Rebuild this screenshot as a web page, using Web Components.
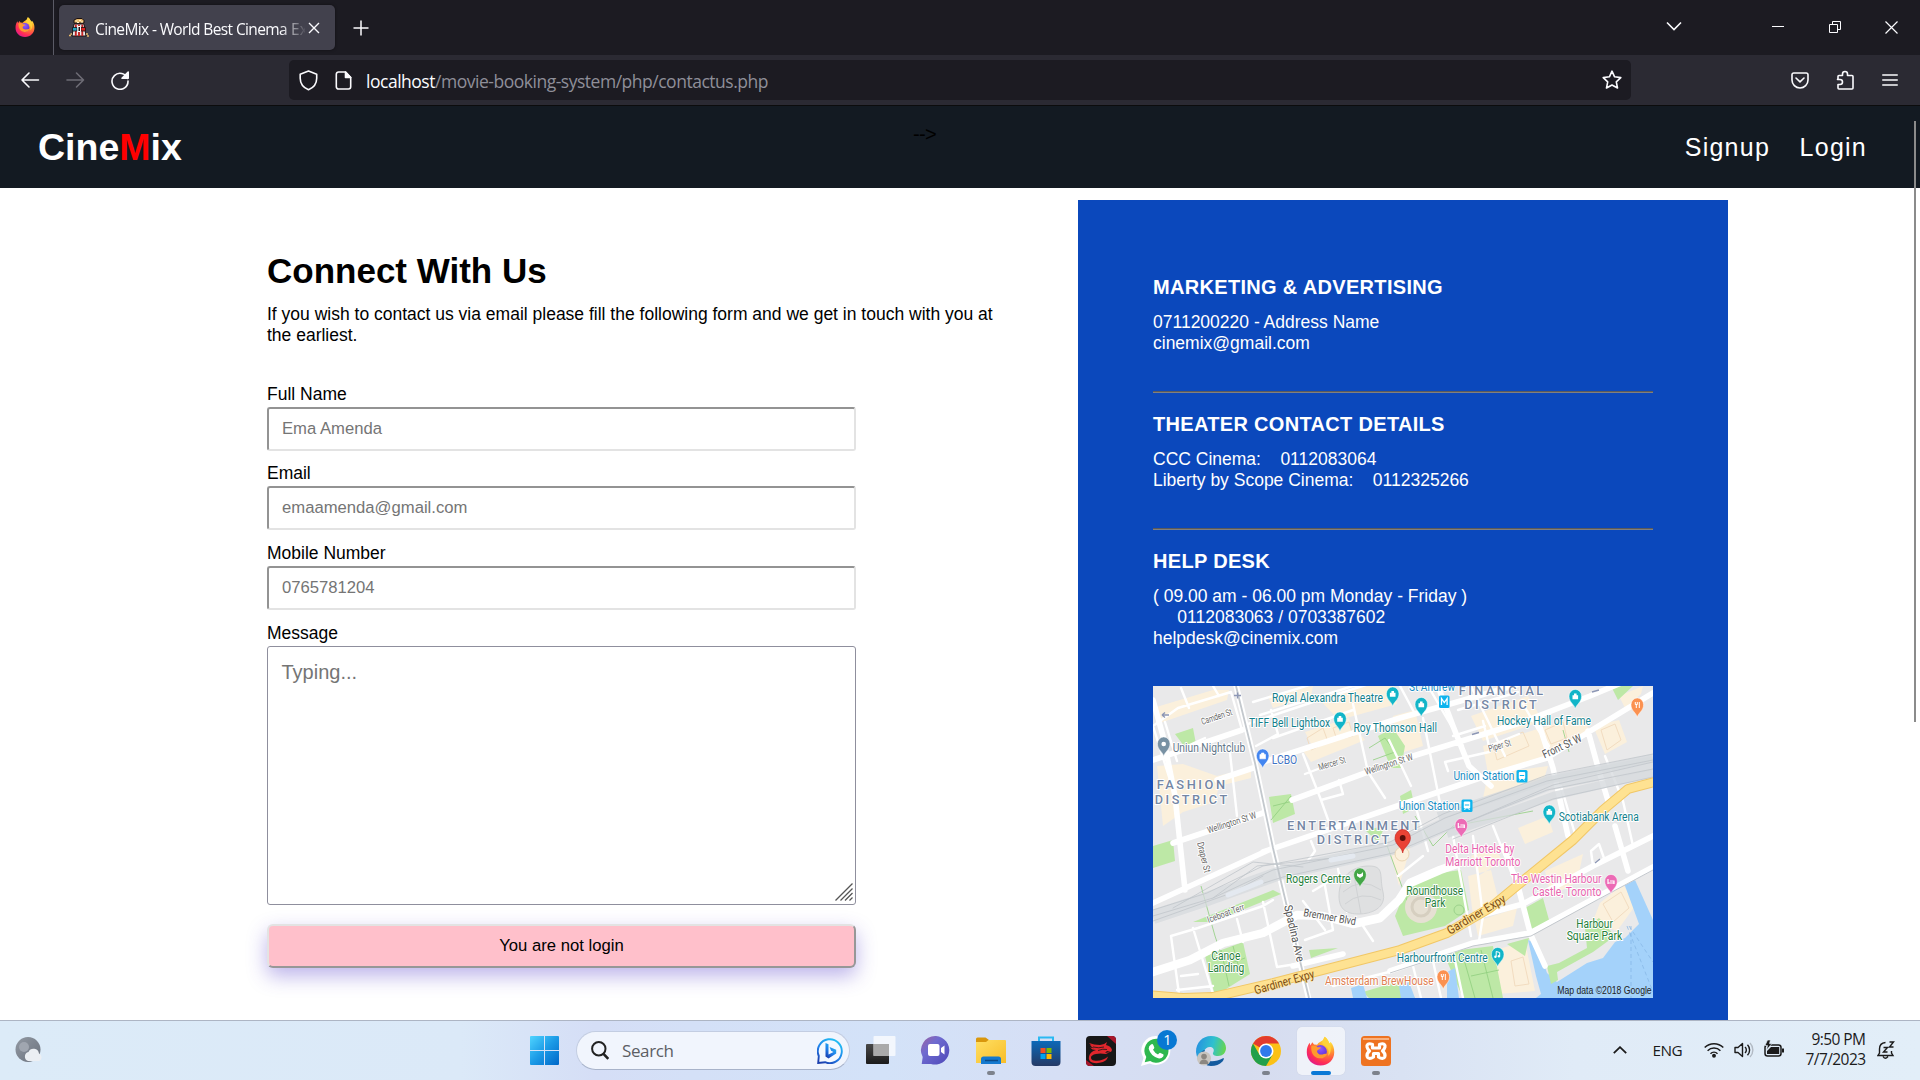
<!DOCTYPE html>
<html lang="en">
<head>
<meta charset="utf-8">
<title>CineMix</title>
<style>
html,body{margin:0;padding:0;background:#fff}
body{width:1920px;height:1080px;overflow:hidden;font-family:"Liberation Sans",Arial,sans-serif}
</style>
</head>
<body>
<desktop-screen></desktop-screen>
<script>
const make=(name,html,after)=>customElements.define(name,class extends HTMLElement{
  connectedCallback(){
    if(this.shadowRoot)return;
    const t=document.createElement('template');
    t.innerHTML=html;
    this.attachShadow({mode:'open'}).appendChild(t.content.cloneNode(true));
    if(after)after(this,this.shadowRoot);
  }
});

/* Text run spread to the width given in "w" */
make('fit-text',`<style>:host{display:inline-block;white-space:pre}</style><slot></slot>`,(el)=>{
  const w=parseFloat(el.getAttribute('w'));
  el.style.letterSpacing='0px';
  const n=el.textContent.length,now=el.getBoundingClientRect().width;
  if(n>1&&now)el.style.letterSpacing=((w-now)/n).toFixed(3)+'px';
});

/* Firefox mark, used in the title bar and the taskbar */
make('firefox-mark',`<style>:host{display:block}svg{display:block;width:100%;height:100%}</style>
<svg viewBox="0 0 30 30"><defs>
<radialGradient id="a" cx=".78" cy=".12" r="1"><stop offset="0" stop-color="#fff44f"/><stop offset=".3" stop-color="#ffb82c"/><stop offset=".55" stop-color="#ff7139"/><stop offset=".8" stop-color="#ff2d55"/><stop offset="1" stop-color="#e01a8c"/></radialGradient>
<radialGradient id="b" cx=".5" cy=".3" r=".7"><stop offset="0" stop-color="#9059ff"/><stop offset="1" stop-color="#5a2bd0"/></radialGradient></defs>
<path fill="url(#a)" d="M15 30C6.700 30 .8 24 .8 16.200c0-4 1-7.200 3-9.700l.8 2.700L6.500 6l1.800 2.200 3.200.3c1.500-2.500 4.500-3.200 6-4.500L19.300.3c3 2 4 4.500 4.700 6.700l1.500-1.200c2.700 3 3.700 6.500 3.700 10.400C29.200 24 23.300 30 15 30z"/>
<circle cx="15" cy="15.500" r="6.600" fill="url(#b)"/>
<path fill="#ff9a2e" d="M5.500 9.500c3-.8 5 .2 6.500 1.500l3.500.2c-.6 2-2.500 2-3.800 3.300-.7 1 .2 3.200 2.400 4 3 .8 5-.8 7.700-.5-1.500 3.300-4.600 5-8 4.500C8 21.800 4.800 17 5.500 9.500z"/>
<path fill="#ffd23a" d="M19.300.3c3 2 4 4.500 4.700 6.700 3 5 1.500 11-1 13 1-4.500.3-8.500-3-10.500-2.500-1.500-4-3-2.500-5.500z"/></svg>`);

make('browser-tabs',`<style>
:host{display:flex;height:55px;background:#1c1b22;align-items:flex-start;color:#fbfbfe}
.ff{width:54px;height:55px;border-right:1px solid #5b5b66;display:flex;align-items:center;box-sizing:border-box;padding-left:15px}
firefox-mark{width:20px;height:20px;margin-top:-1px}
.tab{margin:5px 0 0 5px;width:276px;height:45px;border-radius:5px;background:#42414d;display:flex;align-items:center;box-shadow:0 0 3px rgba(0,0,0,.5)}
.fav{width:20px;height:20px;margin-left:10px}
.t{margin:3px 0 0 6px;width:210px;overflow:hidden;white-space:nowrap;font:15.500px "Open Sans","Noto Sans",sans-serif;line-height:24px;-webkit-mask-image:linear-gradient(90deg,#000 185px,transparent 212px);mask-image:linear-gradient(90deg,#000 185px,transparent 212px)}
.x{width:12px;height:12px;margin-left:3px}
.plus{width:16px;height:16px;margin:20px 0 0 18px}
.sp{flex:1}
.wb{display:flex;align-items:flex-start}
svg{display:block;fill:none;stroke:#fbfbfe}
</style>
<div class="ff"><firefox-mark></firefox-mark></div>
<div class="tab">
<svg class="fav" viewBox="0 0 20 20" stroke="none"><path d="M5 2 8 .5h5l2 2V5H5z" fill="#e9b96a" stroke="#1b1010" stroke-width="1"/><path d="M6.500 3h2M10 2.500h2M12 4h2M8 4.500h2" stroke="#fff3c4"/><path d="M5 6h10l2 12H3z" fill="#ececec" stroke="#1b1010"/><path d="M6.800 6.500v11.500M10 6.500v11.500M13.300 6.500v11.500" stroke="#c32525" stroke-width="1.900"/><path d="M3.500 9.500H8V13H3.500z" fill="#21a5c4" stroke="#1b1010" stroke-width=".8"/><path d="M12 9.500h4.500V13H12z" fill="#d22" stroke="#1b1010" stroke-width=".8"/><path d="M9 8.500h2.500v5H9z" fill="#1b1010"/><path d="M0 17.500h2M1.500 16h1.500M17 16h2M18 18h2" stroke="#e9b96a" stroke-width="1.500"/></svg>
<div class="t"><fit-text w="192">CineMix - World Best Cinema</fit-text><span> Experience</span></div>
<svg class="x" viewBox="0 0 12 12" stroke-width="1.400"><path d="m1 1 10 10M11 1 1 11"/></svg></div>
<svg class="plus" viewBox="0 0 16 16" stroke-width="1.500"><path d="M8 .5v15M.5 8h15"/></svg>
<div class="sp"></div>
<div class="wb">
<svg style="width:16px;height:10px;margin:21px 90px 0 0" viewBox="0 0 16 10" stroke-width="1.600"><path d="m1 1.500 7 7 7-7"/></svg>
<svg style="width:12px;height:12px;margin:20px 45px 0 0" viewBox="0 0 12 12" stroke-width="1"><path d="M0 6.500h12"/></svg>
<svg style="width:12px;height:12px;margin:21px 44px 0 0" viewBox="0 0 12 12" stroke-width="1"><path d="M.5 3.500h8v8h-8zM3.500 3.500v-3h8v8h-3"/></svg>
<svg style="width:13px;height:13px;margin:20.500px 22px 0 0" viewBox="0 0 13 13" stroke-width="1.200"><path d="m.5.5 12 12M12.500.5l-12 12"/></svg>
</div>`);

make('browser-toolbar',`<style>
:host{display:flex;height:50px;background:#2b2a33;border-bottom:1px solid #0c0c0d;align-items:center}
svg{display:block;fill:none;stroke:#fbfbfe;stroke-width:1.600;stroke-linecap:round;stroke-linejoin:round;flex:none}
.url{width:1342px;height:40px;border-radius:5px;background:#1c1b22;display:flex;align-items:center;box-sizing:border-box;padding:0 9px 0 10px;margin-left:159px}
.addr{flex:1;margin-left:14px;font:17.500px "Open Sans","Noto Sans",sans-serif;line-height:24px;color:#8f8f99;white-space:nowrap;padding-top:2px}
.addr b{font-weight:400;color:#fbfbfe}
</style>
<svg width="20" height="18" viewBox="0 0 20 18" style="margin-left:20px"><path d="M18.500 9H2M9 2 2 9l7 7"/></svg>
<svg width="20" height="18" viewBox="0 0 20 18" style="margin-left:26px;stroke:#6d6c75"><path d="M1 9h16.500M10.500 2l7 7-7 7"/></svg>
<svg width="20" height="20" viewBox="0 0 20 20" style="margin-left:24px"><path d="M17.500 8.500A8 8 0 1 0 18 11"/><path d="M18.200 2v6.200H12z" fill="#fbfbfe"/></svg>
<div class="url">
<svg width="19" height="21" viewBox="0 0 19 21" stroke-width="1.800"><path d="M9.500 1 17.700 4.200v4c0 5-3 9.300-8.200 11.600C4.300 17.500 1.200 13.200 1.200 8.200v-4z"/></svg>
<svg width="17" height="19" viewBox="0 0 17 19" style="margin-left:17px"><path d="M10.500 1H3.500a2.200 2.200 0 0 0-2.200 2.200v12.600A2.200 2.200 0 0 0 3.500 18h10a2.200 2.200 0 0 0 2.200-2.200V6.500z"/><path d="M10.500 1v5.500h5.200z" fill="#fbfbfe"/></svg>
<div class="addr"><fit-text w="402"><b>localhost</b>/movie-booking-system/php/contactus.php</fit-text></div>
<svg width="20" height="20" viewBox="0 0 20 20"><path d="m10 1.200 2.600 5.600 6.200.8-4.500 4.200 1.200 6.200-5.500-3-5.500 3 1.200-6.200L1.200 7.600l6.200-.8z"/></svg>
</div>
<svg width="18" height="17" viewBox="0 0 18 17" style="margin:0 0 0 160px"><path d="M2.700 1h12.600A1.700 1.700 0 0 1 17 2.700V8A8 8 0 0 1 1 8V2.700A1.700 1.700 0 0 1 2.700 1z"/><path d="m5 6 4 3.800L13 6"/></svg>
<svg width="18" height="20" viewBox="0 0 18 20" style="margin-left:27px"><path d="M2 8.500V6.500a1 1 0 0 1 1-1h3.500V4a2.500 2.500 0 0 1 5 0v1.500H16a1 1 0 0 1 1 1V18a1 1 0 0 1-1 1H3a1 1 0 0 1-1-1v-3.500h2a2.200 2.200 0 0 0 0-5H1.500z"/></svg>
<svg width="16" height="14" viewBox="0 0 16 14" style="margin-left:28px"><path d="M.8 2h14.400M.8 7h14.400M.8 12h14.400"/></svg>`);

make('site-header',`<style>
:host{display:flex;height:82px;background:#131a22;box-sizing:border-box;padding:0 53px 0 38px;color:#fff;justify-content:space-between;align-items:flex-start}
.logo{font-weight:700;font-size:37.500px;line-height:44px;margin-top:19px;width:300px}
.logo b{color:red}
.stray{color:#000;font-size:20px;line-height:24px;margin-top:16px;width:26px;margin-left:147px;letter-spacing:-.7px}
nav{display:flex;gap:29.500px;font-size:25px;letter-spacing:1.250px;line-height:30px;margin-top:26px;width:500px;justify-content:flex-end}
</style><div class="logo">Cine<b>M</b>ix</div><div class="stray">--&gt;</div><nav><span>Signup</span><span>Login</span></nav>`);

make('form-field',`<style>
:host{display:block;margin-bottom:12.700px}
label{display:block;font-size:17.500px;line-height:20px;margin-bottom:3px;color:#000}
.box{box-sizing:border-box;width:589px;height:44px;border:2px solid;border-color:#939393 #e3e3e3 #e3e3e3 #939393;border-radius:3px;padding-left:13px;font-size:16.670px;line-height:39.500px;color:#757575;background:#fff}
:host([area]){margin-bottom:19px}
:host([area]) .box{display:flex;justify-content:space-between;height:259px;border:1px solid #8f8f9d;border-radius:3px;padding:14px 2px 3px 13.500px;font-size:20px;line-height:23px}
svg{display:none}
:host([area]) svg{display:block;align-self:flex-end}
</style><label><slot name="label"></slot></label><div class="box"><slot></slot><svg width="18" height="18" viewBox="0 0 18 18" stroke="#555" stroke-width="1.300" fill="none"><path d="M.5 17.500 17.500.5M5.500 17.500l12-12M10 17.500l7.500-7.500M14.500 17.500l3-3"/></svg></div>`);

make('contact-form',`<style>
:host{display:block;width:811px;padding-top:63px;box-sizing:border-box}
h1{margin:0;font-size:35px;line-height:40px}
p{margin:13px 0 37.500px;width:740px;font-size:17.500px;line-height:21px}
.btn{box-sizing:border-box;width:589px;height:44px;background:#ffc0cb;border:2px solid;border-color:#e3e3e3 #979797 #979797 #e3e3e3;border-radius:6px;text-align:center;font-size:16.670px;line-height:39px;box-shadow:0 8px 20px rgba(78,56,200,.38)}
</style><h1>Connect With Us</h1>
<p>If you wish to contact us via email please fill the following form and we get in touch with you at the earliest.</p>
<form-field><span slot="label">Full Name</span>Ema Amenda</form-field>
<form-field><span slot="label">Email</span>emaamenda@gmail.com</form-field>
<form-field><span slot="label">Mobile Number</span>0765781204</form-field>
<form-field area><span slot="label">Message</span>Typing...</form-field>
<div class="btn">You are not login</div>`);

const S='stroke-linecap="round" stroke-linejoin="round" fill="none"';
const T=(t,x,y,w,c,o='')=>`<text x="${x}" y="${y}" textLength="${w}" lengthAdjust="spacingAndGlyphs" fill="${c}" ${o}>${t}</text>`;
const R=(t,x,y,a,w,c='#666',f=9.5)=>`<text transform="translate(${x} ${y}) rotate(${a})" textLength="${w}" lengthAdjust="spacingAndGlyphs" fill="${c}" font-size="${f}">${t}</text>`;
const P=(x,y,c,g='')=>`<g transform="translate(${x} ${y})"><path d="M0 12.500C-.6 8-6.300 6-6.300-.3a6.300 6.800 0 0 1 12.600 0C6.300 6 .6 8 0 12.500z" fill="${c}" stroke="#fff" stroke-width=".5"/>${g||'<path d="M-2.800 2.800v-4h1.500V-3h2.600v1.800h1.500v4z" fill="#fff"/>'}</g>`;
const teal='#137f8c',dist='#7486a4',park='#25803a',tp='#12b5c8',pk='#ec6bb5',orr='#fb9150';
const bed='<path d="M-3-2.500v5M-3 1.500h6v-2h-4M3 1.500v1" stroke="#fff" fill="none" stroke-width="1.200"/>';
const fork='<path d="M-2-3v2.500h2V-3M-1-1v4M2-3v6" stroke="#fff" fill="none"/>';
const bus=(x,y)=>`<g transform="translate(${x} ${y})"><rect width="11" height="12.500" rx="1.500" fill="#0eb4ee"/><rect x="2.300" y="2" width="6.400" height="7" rx="1" fill="#fff"/><path d="M3.300 5.500h4.400" stroke="#0eb4ee"/><path d="m3 10.500 1-1.500m4 1.500L7 9" stroke="#fff"/></g>`;
const minor=`M0 40 25 22 78 6M0 40 22 110M12 36 24 75M28 2 36 22M60 0 66 10M76 58 84 130M30 62 52 52M89 44 78 6M100 16 180-8M107 29 200 0 237-5M95 38 130 26 172 12 235-8M120 52 200 24M103 60 125 48 118 24M150 68 168 114 178 142M200 18 215 86 232 112M152 88 178 78M165 104 190 96M168 114 190 108 186 94M262 118 275 165M270 32 288 122M247 0 262 28M236 54 258 100M300 50 332 40M330 35 336 60 366 48M370 18 384 42M295 85 292 76 336 66M275 0 310 60M318 0 352 70M384 42 396 60M305 24 365 6M408 100 422 148M422 148 470 110 500 92M452 70 470 115 480 160M18 250 26 308M18 250 45 242 110 220 120 214M40 242 60 308M84 233 90 256M110 216 124 281 150 277M150 215 172 244M160 205 185 190M172 200 180 244 152 254M185 183 194 226M210 240 220 255M300 150 318 250M320 150 330 230 326 255M340 140 352 170M352 160 378 250M245 190 270 170M440 180 438 165 446 158 452 175 430 185M260 280 268 312M280 275 288 312M300 265 310 312M28 290 45 288M24 304 60 300M180 300 240 285M155 175 162 165 158 155`;
const major=`M0 14 10 50 22 110 32 204M82-5 102 77 120 162 134 221 156 314M0 74 89 44M64 94 100 82M110 76 247 32 297 18 377-5M139 114 247 74 367 37 437 10 480-8M110 166 247 119 327 92 394 72 434 47 500 7M20 157 110 127M0 217 120 162M283-5 300 40 316 80 338 100M385 35 400 82 415 150M435 45 446 85 456 118M237 285 320 257 377 247 444 211 500 181M318 232 370 218 440 180 500 150M350 160 365 200 378 250M377 247 392 280M462 140 475 185M140 280 190 268`;
make('city-map',`<style>:host{display:block;width:500px;height:312px}svg{display:block}</style>
<svg width="500" height="312" viewBox="0 0 500 312" font-family="Roboto,sans-serif" font-size="12">
<rect width="500" height="312" fill="#e9e9ea"/>
<g fill="#fbf0dc"><path d="M0 22 60 4 76 4 74 14 4 38zM4 80 30 78 64 90 98 82 98 92 66 100 62 116 30 126 10 140zM115 10 160 0 158 10 120 22zM150 65 205 45 212 54 158 76zM152 46 196 32 200 52 160 62zM165 12 240-8 244 18 186 34zM240 30 262 24 270 60 245 68zM318 30 375 10 390 35 330 55zM330 60 394 40 430 30 436 44 394 70 335 88zM440 40 466 34 474 56 452 68zM466 10 490 0 488 8 472 22zM335 88 395 80 390 96 330 112zM365 142 395 130 400 146 372 158zM318 170 340 160 350 175 325 190zM315 190 320 230 345 212 338 184zM392 185 430 168 424 196 398 210zM340 265 372 255 382 305 345 308zM447 217 470 198 482 220 464 245 440 235zM322 236 364 222 360 240 325 250zM306 275 332 270 338 312H316zM236 160 258 160 246 200z"/></g>
<g fill="#bde8a6"><path d="M22 48 40 42 43 58 31 60zM116 111 138 108 142 128 120 137zM0 160 20 154 22 175 0 182zM225 50 240 42 252 60 248 82 238 82zM247 110 258 104 262 122 250 128zM212 144 232 140 225 156zM52 270 90 256 97 288 62 310zM242 230 256 196 278 188 308 184 316 224 292 240 250 250zM372 222 390 212 396 234 378 244zM290 266 340 260 350 312H310zM210 306 250 294 262 312H216zM354 258 376 252 372 270zM458 0H480L465 14zM156 264 185 262 158 272zM40 236 120 204 128 208 60 236z"/></g>
<g fill="none" stroke="#8fce7e" stroke-width=".8"><path d="M48 200 62 250 68 268M68 264 76 300M80 260 88 290M56 285 92 272M262 130 280 160 300 140 380 125M216 62 232 52 242 66 220 74M310 270 322 312M328 264 340 312M318 290 346 284M120 120 140 115M118 134 138 110M232 154 256 220M410 44 416 66"/></g>
<path fill="#a4d2fa" d="M375 254 384 258 394 287 404 296 434 277 450 272 462 256 472 252 486 238 471 197 482 194 500 234V312H383L388 308 383 290zM294 286 302 282 306 312H294zM246 300 256 296 262 312H248zM198 302 210 298 214 312H200z"/>
<path fill="#bde8a6" d="M394 280 406 277 434 262 432 242 446 232 462 250 440 266 404 286 405 294 398 298z"/>
<path d="M476 240 500 276M474 240 500 306M478 240V312" stroke="#84b4e4" stroke-width=".7" stroke-dasharray="4 3" fill="none"/>
<g fill="none" stroke="#f2dcc0" stroke-width="1"><path d="M154 52 170 42 175 56 158 64zM180 42 196 36 200 50 184 54zM392 44 410 36 414 52 398 58zM340 58 370 46 376 60 344 74zM448 44 462 38 468 54 454 64zM358 275 370 271 376 298 362 300zM450 218 468 206 476 222 460 236z"/></g>
<g ${S} stroke="#fff"><path d="${minor}" stroke-width="2.400"/><path d="${major}" stroke-width="5.600"/>
<path d="M0 286 37 274 70 257 110 247 144 229 170 230 200 238 227 232 246 214 257 197 287 184 304 178" stroke-width="8.500"/></g>
<g ${S}><path d="M0 231 54 213 127 187 240 162 294 138 394 98 500 77" stroke="#d6dadd" stroke-opacity=".75" stroke-width="14" stroke-linecap="butt"/>
<path d="M285 130 394 94 500 72M294 148 400 110 500 87" stroke="#d6dadd" stroke-opacity=".8" stroke-width="8" stroke-linecap="butt"/>
<path d="M0 224 54 207 110 180 237 156 290 128 394 89 500 68M0 230 60 212 120 184 240 159 292 132 394 95 500 74M0 235 70 210 130 191 240 167 294 144 394 104 500 83M20 222 100 176 150 181M60 212 104 180 200 170M80 206 110 190M300 142 400 99 500 76M300 153 400 113 500 91" stroke="#c0c5ca" stroke-width=".8"/>
<path d="M75 209 108 196M178 174 200 170" stroke="#e4e9f0" stroke-width="5"/></g>
<path d="M83 0 102 77 120 162 134 221 156 312" stroke="#c3c8cd" stroke-width="1.800" fill="none"/>
<path d="M237 287 320 260 378 250 444 214 500 184" stroke="#c3c8cd" stroke-width="1" fill="none"/>
<path d="M186 210C186 190 200 180 216 180S226 190 230 206 218 228 206 228 186 224 186 210z" fill="#dfe0e1" stroke="#d0d2d4"/><path d="M190 206Q208 190 228 204M192 218Q208 204 228 214M200 184 208 228" stroke="#d0d2d4" fill="none"/>
<circle cx="268" cy="221" r="16" fill="#e6e0d3"/><circle cx="268" cy="221" r="9" fill="none" stroke="#d6cfc0" stroke-width="3"/><circle cx="249" cy="168" r="7" fill="#fbf0dc" stroke="#ead6b5"/>
<circle cx="306" cy="224" r="5" fill="none" stroke="#9cd28c"/>
<g ${S}><path d="M-5 309 30 312 60 311 120 297 247 264 294 247 337 222 377 189 420 154 450 124 475 103 505 95" stroke="#f1c766" stroke-width="10"/><path d="M-5 309 30 312 60 311 120 297 247 264 294 247 337 222 377 189 420 154 450 124 475 103 505 95" stroke="#fee292" stroke-width="8"/></g>
<path d="M9 29h7M9 29l3-2.500M9 29l3 2.500M81 9.500h7M84.500 6.500v6M319 48.500l7-2M439 6l7-2M442 177l5-4" stroke="#8d97b5" stroke-width="1.400"/>
<g stroke="#fff" stroke-width="2" paint-order="stroke" stroke-linejoin="round">
${R('Camden St',49.5,39,-19,32)}${R('Mercer St',166.5,84.5,-17,28)}${R('Piper St',336.5,66,-17,23)}${R('Wellington St W',55.5,147.5,-18,51)}${R('Wellington St W',213,89,-18,50)}
${R('Front St W',391.5,72.5,-25,42,'#555',11.5)}${R('Draper St',44,157,76,31)}${R('Iceboat Terr',55.5,237,-20,39)}${R('Spadina Ave',131,220,77,58,'#555',11.5)}${R('Bremner Blvd',150,230,10,53,'#555',11)}
${T('Royal Alexandra Theatre',119,16.3,111,teal)}${T('TIFF Bell Lightbox',96,40.6,81,teal)}${T('Roy Thomson Hall',200.5,46.4,83.500,teal)}${T('Hockey Hall of Fame',344,39,94,teal)}
${T('Uniun Nightclub',19.7,65.7,72.500,'#627789')}${T('LCBO',118.7,78,25.500,'#3e72c4')}${T('St Andrew',256,5.3,46,'#168cc4')}
${T('Union Station',300.500,94.3,61,'#168cc4')}${T('Union Station',245.700,124,61,'#168cc4')}${T('Scotiabank Arena',405.7,134.5,80,teal)}
${T('Delta Hotels by',292.3,167,69,'#e763ae')}${T('Marriott Toronto',292.3,179.7,75,'#e763ae')}${T('The Westin Harbour',358,197.3,90.500,'#e763ae')}${T('Castle, Toronto',379.3,209.7,69,'#e763ae')}
${T('Roundhouse',253.3,209,57,park)}${T('Park',271.7,221,20.700,park)}${T('Rogers Centre',133,196.700,64.500,park)}
${T('Canoe',58.3,274,29,park)}${T('Landing',54.7,285.7,36.500,park)}${T('Harbourfront Centre',243.7,275.7,91,teal)}${T('Amsterdam BrewHouse',172,299,108.700,'#df7f52')}
${T('Harbour',423.3,241.7,36.500,park)}${T('Square Park',413.7,254,55.500,park)}
</g>
<g stroke="#fee292" stroke-width="1.500" paint-order="stroke">${R('Gardiner Expy',297,249,-31,66,'#7b4b12',12)}${R('Gardiner Expy',102.500,308.500,-16,62,'#7b4b12',12)}</g>
<g font-size="12.500" font-weight="500" stroke="#fff" stroke-width="1.800" paint-order="stroke">
<g letter-spacing="2.500">${[['FASHION',3.700,102.700,71],['DISTRICT',1.700,117.500,75],['ENTERTAINMENT',134,144.300,135],['DISTRICT',163.700,158.300,75],['FINANCIAL',305.700,9.400,87],['DISTRICT',311.300,23,75]].map(a=>T(a[0],a[1],a[2],a[3],dist)).join('')}</g></g>
${T('Map data ©2018 Google',404.2,307.7,94.500,'#222','font-family="Liberation Sans" font-size="11.500"')}
${P(239.700,8,tp)}${P(187,33,tp)}${P(268.300,18.500,tp)}${P(422.300,10.500,tp)}${P(484.300,19,orr,fork)}${P(10.700,58,'#7891a3','<circle r="2.300" fill="#fff"/>')}${P(109.700,70,'#4285f0','<path d="M-2.800 2.800V-1.500h5.600v4.300zM-1.300-1.500V-3h2.600v1.500" fill="#fff" stroke="#fff" stroke-width=".6"/>')}${P(396.300,126,tp)}${P(308.300,139.500,pk,bed)}${P(458,195.500,pk,bed)}${P(207,189,'#43a647','<path d="M-3-2q3 3 6-1v4l-3 2-3-2z" fill="#fff"/>')}${P(344.700,268.500,tp,'<path d="M-1.500 2v-5l3.500 1v3.500" stroke="#fff" fill="none"/><circle cx="-2.300" cy="2.300" r="1.200" fill="#fff"/><circle cx="1.200" cy="1.800" r="1.200" fill="#fff"/>')}${P(290.300,291,orr,fork)}
<rect x="286" y="9.500" width="10.500" height="12.500" rx="1.500" fill="#0eb4ee"/><path d="M288.500 19v-6.500l2.800 4 2.800-4V19" stroke="#fff" stroke-width="1.300" fill="none"/>
${bus(363.500,84)}${bus(308.500,113.500)}
<path d="M249.700 167C249 161 242 159 242 152a7.700 8.500 0 0 1 15.400 0c0 7-7 9-7.700 15z" fill="#ea4335" stroke="#c5221f" stroke-width=".6"/><circle cx="249.700" cy="152" r="2.900" fill="#5c0f0a"/>
</svg>`);

make('info-section',`<style>
:host{display:block}
h2{margin:0;font-size:20px;line-height:24px;letter-spacing:.320px;font-weight:700}
div{margin-top:13px;font-size:17.500px;line-height:21px;white-space:pre}
hr{border:0;height:1px;background:#808080;border-top:1px solid #5a5a5a;margin:37px 0 19px}
:host([last]) hr{display:none}
</style><h2><slot name="title"></slot></h2><div><slot></slot></div><hr>`);

make('info-card',`<style>
:host{display:block;box-sizing:border-box;width:650px;height:820px;margin-top:12px;background:#0b48bc;color:#fff;padding:75px 75px 0}
city-map{margin-top:37px}
</style>
<info-section><span slot="title">MARKETING &amp; ADVERTISING</span>0711200220 - Address Name
cinemix@gmail.com</info-section>
<info-section><span slot="title">THEATER CONTACT DETAILS</span>CCC Cinema:&nbsp;&nbsp;&nbsp;&nbsp;0112083064
Liberty by Scope Cinema:&nbsp;&nbsp;&nbsp;&nbsp;0112325266</info-section>
<info-section last><span slot="title">HELP DESK</span>( 09.00 am - 06.00 pm Monday - Friday )
&nbsp;&nbsp;&nbsp;&nbsp;&nbsp;0112083063 / 0703387602
helpdesk@cinemix.com</info-section>
<city-map></city-map>`);

make('task-icon',`<style>
:host{display:flex;position:relative;width:48px;height:48px;margin:6px 3.500px 0;border-radius:5px;justify-content:center;align-items:flex-start;box-sizing:border-box;padding-top:9px;flex:none}
:host([active]){background:rgba(255,255,255,.6);box-shadow:0 0 1px rgba(0,0,0,.15)}
i{display:none;position:absolute;bottom:0;left:20px;width:8px;height:4px;border-radius:2px;background:#7d828c}
:host([open]) i{display:block}
:host([active]) i{display:block;left:14px;width:20px;background:#0a78d6}
::slotted(svg){display:block;width:30px;height:30px;overflow:visible}
::slotted(firefox-mark){width:29px;height:30px}
</style><slot></slot><i></i>`);

make('task-bar',`<style>
:host{display:flex;height:60px;box-sizing:border-box;border-top:1px solid #adb5c4;background:linear-gradient(90deg,#dcebf8 0,#dbe9f8 24%,#d5def6 31%,#d4e0f7 36%,#d3e2f8 46%,#d6dff5 55%,#d6dcef 65%,#d9e2f3 73%,#e0ebf7 82%,#e2eef8 100%);color:#1b1b1b;font-family:"Open Sans","Noto Sans",sans-serif}
.w{width:27px;height:27px;margin:16px 0 0 15px;flex:none}
.win{width:29px;height:29px;margin:15px 0 0 488px;flex:none}
.search{box-sizing:border-box;margin:10px 0 0 17px;width:274px;height:39px;border-radius:20px;background:#f1f5fd;border:1px solid #c3cde2;border-bottom-color:#a8b3ca;display:flex;align-items:center;padding:0 6px 0 14px;font-size:17px;color:#5c5e64;flex:none}
.search fit-text{margin:0 auto 0 13px}
.icons{display:flex;margin-left:3px}
svg{display:block;flex:none}
.tray{display:flex;margin-left:auto;font-size:16px}
.clock{display:flex;flex-direction:column;align-items:flex-end;width:66px;font-size:15.500px;line-height:20px;margin:8px 0 0 15.500px}
</style>
<svg class="w" viewBox="0 0 27 27"><defs><linearGradient id="m" x1="0" y1="0" x2="1" y2="1"><stop offset="0" stop-color="#9299a3"/><stop offset="1" stop-color="#6b727d"/></linearGradient></defs><circle cx="13" cy="12.500" r="12.500" fill="url(#m)"/><circle cx="9" cy="10" r="5" fill="#a0a6b0"/><path d="M13 24a4.700 4.700 0 0 1 .5-9A5.500 5.500 0 0 1 24 16.500a4 4 0 0 1 0 7.500z" fill="#eceff3"/></svg>
<svg class="win" viewBox="0 0 29 29"><defs><linearGradient id="q" x1="0" y1="0" x2="1" y2="1"><stop offset="0" stop-color="#4fd4ff"/><stop offset=".5" stop-color="#1b9ae6"/><stop offset="1" stop-color="#0067c8"/></linearGradient></defs><path fill="url(#q)" d="M1 0h13v14H0V1a1 1 0 0 1 1-1zM15 0h13a1 1 0 0 1 1 1v13H15zM0 15h14v14H1a1 1 0 0 1-1-1zM15 15h14v13a1 1 0 0 1-1 1H15z"/></svg>
<div class="search"><svg width="18" height="19" viewBox="0 0 18 19" fill="none" stroke="#222" stroke-width="2"><circle cx="7.800" cy="7.800" r="6.700"/><path d="m12.500 12.800 4.800 5" stroke-width="2.600"/></svg><fit-text w="51.500">Search</fit-text>
<svg width="26" height="26" viewBox="0 0 26 26"><defs><linearGradient id="bg" x1=".8" y1="0" x2=".2" y2="1"><stop offset="0" stop-color="#23c4f5"/><stop offset=".6" stop-color="#1f7be8"/><stop offset="1" stop-color="#1b3fae"/></linearGradient></defs><path d="M1.200 25 1.800 18A12 12 0 1 1 8 24.200z" fill="#f4f9ff" stroke="url(#bg)" stroke-width="1.900"/><path d="m8.500 5 3 1.200v10.300l5-2.600-2.400-1.200-1.500-3.700 6.600 2.800v3.600l-7.700 5-3-1.800z" fill="url(#bg)"/></svg></div>
<div class="icons">
<task-icon><svg viewBox="0 0 30 30"><defs><linearGradient id="tb" x1="0" y1="0" x2="0" y2="1"><stop offset="0" stop-color="#484848"/><stop offset="1" stop-color="#1b1b1b"/></linearGradient></defs><rect y="8" width="23" height="20" rx="1" fill="url(#tb)"/><rect x="7.500" width="22" height="20" rx="1" fill="#fff" fill-opacity=".72"/><path d="M7.500 8H23v12H7.500z" fill="#aaa"/></svg></task-icon>
<task-icon><svg viewBox="0 0 30 30"><defs><linearGradient id="ch" x1="0" y1="0" x2="1" y2="1"><stop offset="0" stop-color="#a0629f"/><stop offset=".35" stop-color="#6f6bd0"/><stop offset="1" stop-color="#4d48b8"/></linearGradient></defs><path d="M15 0a14.300 14.300 0 1 1-5 28H.7l1-7A14.300 14.300 0 0 1 15 0z" fill="url(#ch)"/><rect x="7" y="8" width="11.500" height="12" rx="2" fill="#fff"/><path d="m20 12 3.500-2.500v9L20 16z" fill="#fff"/></svg></task-icon>
<task-icon open><svg viewBox="0 0 30 30"><defs><linearGradient id="fo" x1="0" y1="0" x2="1" y2="1"><stop offset="0" stop-color="#ffdf63"/><stop offset="1" stop-color="#f8bd28"/></linearGradient></defs><path d="M0 3a1.500 1.500 0 0 1 1.500-1.500h8L13 4v4H0z" fill="#d9970c"/><path d="M0 6h10l2.500-2H29a1 1 0 0 1 1 1v22H0z" fill="url(#fo)"/><path d="M5 28v-5a2.500 2.500 0 0 1 2.500-2.500h15A2.500 2.500 0 0 1 25 23v5z" fill="#1479cf"/><path d="M9 24.500h13" stroke="#0b4a87" stroke-width="1.500"/></svg></task-icon>
<task-icon><svg viewBox="0 0 30 30"><defs><linearGradient id="st" x1="0" y1="0" x2="0" y2="1"><stop offset="0" stop-color="#0c69b8"/><stop offset="1" stop-color="#253a66"/></linearGradient></defs><path d="M8 6V1.500h14V6" stroke="#2bb9f2" stroke-width="2" fill="none"/><path d="M.5 5h29v21a4 4 0 0 1-4 4h-21a4 4 0 0 1-4-4z" fill="url(#st)"/><path fill="#f25022" d="M9.500 12h5v5h-5z"/><path fill="#7fba00" d="M15.500 12h5v5h-5z"/><path fill="#00a4ef" d="M9.500 18h5v5h-5z"/><path fill="#ffb900" d="M15.500 18h5v5h-5z"/></svg></task-icon>
<task-icon><svg viewBox="0 0 30 30"><rect width="30" height="30" rx="4" fill="#171717"/><path d="M21 0h5a4 4 0 0 1 4 4v4zM0 24l8 6H4a4 4 0 0 1-4-4z" fill="#a8152a"/><path d="M3 7q5 2 11 2 4 0 7-3l-1 3q5 1 6 5l-1 2-4-1-2 2 5-1-4 2q-6-1-10 0-5 1-5 3.500t3 3q4 1 9-1 3-1 5-3-1 4-5 5.500-6 2-11 .5-4-2-3-6 1-5 7-6.500-4 0-6-2.500l4 .8q-3-1.500-4-3.500l4 .8Q4 9 3 7z" fill="#e0262c"/><path d="M7 11q6 1.500 11 0M12 14.500q5-2 9-1" stroke="#171717" fill="none" stroke-width=".8"/></svg></task-icon>
<task-icon><svg viewBox="0 0 30 30"><path d="M15 0A14.500 14.500 0 1 1 8.500 27.500L0 30l2.500-8A14.500 14.500 0 0 1 15 0z" fill="#fff"/><path d="M15.200 2.700a12 12 0 1 1-6 22.200L3.700 26.300l1.600-5.200A12 12 0 0 1 15.200 2.700z" fill="#2fb84f"/><path d="M10 8.500q1.500-1 2.300.4l1 2.600q.2 1-1.300 2.300 2 3.500 5 4.700 1.500-2 2.400-1.600l2.800 1.400q.8.600 0 2.200-2 2.500-5 1.800-7.500-2.300-9.500-9.500-.1-3 2.300-4.300z" fill="#fff"/><circle cx="26" cy="4" r="10" fill="#0878d3"/><text x="26.500" y="9" text-anchor="middle" font-size="14.500" fill="#fff" font-family="Open Sans">1</text></svg></task-icon>
<task-icon><svg viewBox="0 0 30 30"><defs><linearGradient id="ea" x1="0" y1=".3" x2="1" y2=".5"><stop offset="0" stop-color="#2691e0"/><stop offset=".55" stop-color="#2fc0cf"/><stop offset="1" stop-color="#68d64c"/></linearGradient></defs><path d="M0 16C0 6.500 6.500 0 15 0c9 0 15 6 15 12 0 5-3.500 8-8 8-4 0-5.500-1.500-5-3 2-3.500 0-6-3-6-6 0-8 7-5 12L3 24q-3-4-3-8z" fill="url(#ea)"/><path d="M9 14q-3 5 2 10.500Q18 27 27.500 22q1 .5-1 3.500Q22 30 15 30T2 22Q5 14 9 14z" fill="#135a9e"/><circle cx="8" cy="22.500" r="7" fill="#c9c5bf"/><circle cx="8" cy="20.500" r="2.800" fill="#8c8781"/><path d="M3.500 28a4.500 4.500 0 0 1 9 0z" fill="#8c8781"/></svg></task-icon>
<task-icon open><svg viewBox="0 0 30 30"><circle cx="15" cy="15" r="15" fill="#fbc116"/><path d="M15 15 2 7.500A15 15 0 0 1 28 7.500H15z" fill="#e33b2e"/><path d="M2 7.500A15 15 0 0 0 15 30l6.500-11.200L15 22l-6.500-3.300z" fill="#22a04b"/><circle cx="15" cy="15" r="7.500" fill="#fff"/><circle cx="15" cy="15" r="5.900" fill="#3079ec"/></svg></task-icon>
<task-icon active><firefox-mark></firefox-mark></task-icon>
<task-icon open><svg viewBox="0 0 30 30"><rect width="30" height="30" rx="3.500" fill="#ee7321"/><path d="M2 2h26v2H2z" fill="#f9b17e"/><path d="M11.500 8.500C7 6.500 5.500 9 6 11c.4 1.800 1.500 3 2.500 4-2 1.500-3 3.500-2.300 5.700.8 2.300 3.500 2.300 6.300.3v-3.500h5V21c2.800 2 5.500 2 6.300-.3.700-2.200-.3-4.200-2.300-5.700 1-1 2.100-2.200 2.500-4 .5-2-1-4.500-5.500-2.500V12h-7z" fill="none" stroke="#fff" stroke-width="3.200" stroke-linejoin="round"/></svg></task-icon>
</div>
<div class="tray">
<svg width="14" height="8" viewBox="0 0 14 8" style="margin-top:24.500px" fill="none" stroke="#1b1b1b" stroke-width="1.800"><path d="m.8 7.200 6.200-6 6.200 6"/></svg>
<fit-text w="29.500" style="font-size:15.300px;line-height:24px;margin:17px 0 0 26px">ENG</fit-text>
<svg width="20" height="16" viewBox="0 0 20 16" style="margin:21px 0 0 22px" fill="none" stroke="#1b1b1b" stroke-width="1.500"><path d="M.7 5.500a13.200 13.200 0 0 1 18.600 0M3.600 8.700a9 9 0 0 1 12.800 0M6.500 11.700a5 5 0 0 1 7 0"/><circle cx="10" cy="13.800" r="1.200" fill="#1b1b1b"/></svg>
<svg width="20" height="16" viewBox="0 0 20 16" style="margin:21px 0 0 9.500px" fill="none" stroke="#1b1b1b" stroke-width="1.400"><path d="M1 5.500h3L8.500 1.500v13L4 10.500H1z" stroke-linejoin="round"/><path d="M11 5a4 4 0 0 1 0 6M13.500 2.800a7.500 7.500 0 0 1 0 10.400"/><path d="M16 1a10 10 0 0 1 0 14" stroke="#b2bac4"/></svg>
<svg width="20" height="17" viewBox="0 0 20 17" style="margin:19px 0 0 10.500px"><rect x="1" y="5" width="16" height="11" rx="2.500" fill="none" stroke="#1b1b1b" stroke-width="1.500"/><path d="M7 7h8.200v7H3v-3z" fill="#1b1b1b"/><path d="M18 8.500h2v4h-2z" fill="#1b1b1b"/><path d="M3.500 0h3L5.500 3.500H8L2.500 10l1-4.500H1z" fill="#1b1b1b" stroke="#e1edf8" stroke-width=".7"/></svg>
<div class="clock"><fit-text w="54">9:50 PM</fit-text><fit-text w="60">7/7/2023</fit-text></div>
<svg width="18" height="19" viewBox="0 0 18 19" style="margin:20px 25px 0 11.500px" fill="none" stroke="#1b1b1b" stroke-width="1.400"><path d="M8.500 1.500Q2.500 2 2.500 8v4L1 14.500h15L14.500 12v-2M6 15.500q2 3.500 5 0"/><path d="M6.500 6.500h4l-4 4.500h4M12.500 1h4l-4 5h4"/></svg>
</div>`);

make('desktop-screen',`<style>
:host{display:flex;flex-direction:column;width:1920px;height:1080px;overflow:hidden;background:#fff;position:relative}
main{display:flex;height:832px;padding-left:267px}
site-header,browser-tabs,browser-toolbar,task-bar{flex:none}
.scroll{position:absolute;left:1914px;top:121px;width:2px;height:601px;background:#8b8b8b}
</style>
<browser-tabs></browser-tabs><browser-toolbar></browser-toolbar>
<site-header></site-header>
<main><contact-form></contact-form><info-card></info-card></main>
<task-bar></task-bar><div class="scroll"></div>`);
</script>
</body>
</html>
